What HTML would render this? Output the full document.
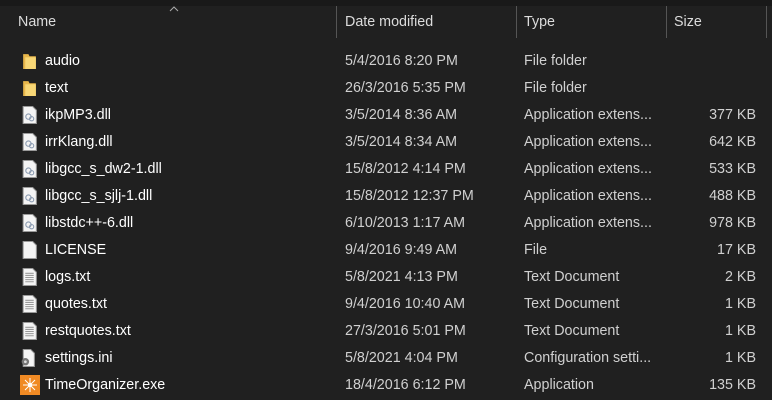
<html><head><style>
body{margin:0;width:772px;height:400px;background:#202020;font-family:"Liberation Sans",sans-serif;font-size:14.3px;overflow:hidden;position:relative}
.top{position:absolute;left:0;top:0;width:772px;height:6px;background:#191919}
.sep{position:absolute;top:6px;height:32px;width:1px;background:#555}
.h{position:absolute;top:14px;color:#dcdcdc}
.r{position:absolute;left:0;height:27px;width:772px}
.r span{position:absolute;top:5px;white-space:nowrap}
.n{left:45px;color:#fff}.d{left:345px;color:#d0d0d0}.t{left:524px;color:#d0d0d0}.s{right:16px;color:#d0d0d0}
.ic{position:absolute;left:22px;top:4px;width:15px;height:18px}
</style></head><body>
<div class="top"></div>
<div class="sep" style="left:336px"></div><div class="sep" style="left:516px"></div><div class="sep" style="left:666px"></div><div class="sep" style="left:766px"></div>
<svg style="position:absolute;left:169px;top:6px" width="10" height="6"><path d="M1 5L5 1L9 5" stroke="#aaa" fill="none"/></svg>
<div class="h" style="left:18px">Name</div><div class="h" style="left:345px">Date modified</div><div class="h" style="left:524px">Type</div><div class="h" style="left:674px">Size</div>

<div class="r" style="top:48px"><svg class="ic" viewBox="0 0 14 17"><path d="M1 2h5l1 2h6v12H1z" fill="#e8b64a"/><path d="M3 5h10v11H3z" fill="#f8d776"/></svg><span class="n">audio</span><span class="d">5/4/2016 8:20 PM</span><span class="t">File folder</span></div>
<div class="r" style="top:75px"><svg class="ic" viewBox="0 0 14 17"><path d="M1 2h5l1 2h6v12H1z" fill="#e8b64a"/><path d="M3 5h10v11H3z" fill="#f8d776"/></svg><span class="n">text</span><span class="d">26/3/2016 5:35 PM</span><span class="t">File folder</span></div>

<div class="r" style="top:102px"><svg class="ic" viewBox="0 0 14 17"><path d="M1 .5h9l3.5 3.5v12.5H1z" fill="#f4f4f4" stroke="#999"/><circle cx="6" cy="10" r="2.5" fill="none" stroke="#8a9ab0"/><circle cx="9" cy="12" r="2" fill="none" stroke="#8a9ab0"/></svg><span class="n">ikpMP3.dll</span><span class="d">3/5/2014 8:36 AM</span><span class="t">Application extens...</span><span class="s">377 KB</span></div>
<div class="r" style="top:129px"><svg class="ic" viewBox="0 0 14 17"><path d="M1 .5h9l3.5 3.5v12.5H1z" fill="#f4f4f4" stroke="#999"/><circle cx="6" cy="10" r="2.5" fill="none" stroke="#8a9ab0"/><circle cx="9" cy="12" r="2" fill="none" stroke="#8a9ab0"/></svg><span class="n">irrKlang.dll</span><span class="d">3/5/2014 8:34 AM</span><span class="t">Application extens...</span><span class="s">642 KB</span></div>
<div class="r" style="top:156px"><svg class="ic" viewBox="0 0 14 17"><path d="M1 .5h9l3.5 3.5v12.5H1z" fill="#f4f4f4" stroke="#999"/><circle cx="6" cy="10" r="2.5" fill="none" stroke="#8a9ab0"/><circle cx="9" cy="12" r="2" fill="none" stroke="#8a9ab0"/></svg><span class="n">libgcc_s_dw2-1.dll</span><span class="d">15/8/2012 4:14 PM</span><span class="t">Application extens...</span><span class="s">533 KB</span></div>
<div class="r" style="top:183px"><svg class="ic" viewBox="0 0 14 17"><path d="M1 .5h9l3.5 3.5v12.5H1z" fill="#f4f4f4" stroke="#999"/><circle cx="6" cy="10" r="2.5" fill="none" stroke="#8a9ab0"/><circle cx="9" cy="12" r="2" fill="none" stroke="#8a9ab0"/></svg><span class="n">libgcc_s_sjlj-1.dll</span><span class="d">15/8/2012 12:37 PM</span><span class="t">Application extens...</span><span class="s">488 KB</span></div>
<div class="r" style="top:210px"><svg class="ic" viewBox="0 0 14 17"><path d="M1 .5h9l3.5 3.5v12.5H1z" fill="#f4f4f4" stroke="#999"/><circle cx="6" cy="10" r="2.5" fill="none" stroke="#8a9ab0"/><circle cx="9" cy="12" r="2" fill="none" stroke="#8a9ab0"/></svg><span class="n">libstdc++-6.dll</span><span class="d">6/10/2013 1:17 AM</span><span class="t">Application extens...</span><span class="s">978 KB</span></div>

<div class="r" style="top:237px"><svg class="ic" viewBox="0 0 14 17"><path d="M1 .5h9l3.5 3.5v12.5H1z" fill="#f4f4f4" stroke="#999"/></svg><span class="n">LICENSE</span><span class="d">9/4/2016 9:49 AM</span><span class="t">File</span><span class="s">17 KB</span></div>
<div class="r" style="top:264px"><svg class="ic" viewBox="0 0 14 17"><path d="M1 .5h9l3.5 3.5v12.5H1z" fill="#f4f4f4" stroke="#999"/><path d="M3 5h8M3 7h8M3 9h8M3 11h8M3 13h8" stroke="#999"/></svg><span class="n">logs.txt</span><span class="d">5/8/2021 4:13 PM</span><span class="t">Text Document</span><span class="s">2 KB</span></div>
<div class="r" style="top:291px"><svg class="ic" viewBox="0 0 14 17"><path d="M1 .5h9l3.5 3.5v12.5H1z" fill="#f4f4f4" stroke="#999"/><path d="M3 5h8M3 7h8M3 9h8M3 11h8M3 13h8" stroke="#999"/></svg><span class="n">quotes.txt</span><span class="d">9/4/2016 10:40 AM</span><span class="t">Text Document</span><span class="s">1 KB</span></div>
<div class="r" style="top:318px"><svg class="ic" viewBox="0 0 14 17"><path d="M1 .5h9l3.5 3.5v12.5H1z" fill="#f4f4f4" stroke="#999"/><path d="M3 5h8M3 7h8M3 9h8M3 11h8M3 13h8" stroke="#999"/></svg><span class="n">restquotes.txt</span><span class="d">27/3/2016 5:01 PM</span><span class="t">Text Document</span><span class="s">1 KB</span></div>
<div class="r" style="top:345px"><svg class="ic" viewBox="0 0 14 17" style="left:20px"><path d="M3 .5h7l3.5 3.5v12.5H3z" fill="#f4f4f4" stroke="#999"/><circle cx="5" cy="12" r="3.5" fill="#777"/><circle cx="5" cy="12" r="1.3" fill="#ddd"/></svg><span class="n">settings.ini</span><span class="d">5/8/2021 4:04 PM</span><span class="t">Configuration setti...</span><span class="s">1 KB</span></div>
<div class="r" style="top:372px"><svg class="ic" viewBox="0 0 20 20" style="left:20px;top:3px;width:20px;height:20px"><rect width="20" height="20" fill="#f08a24"/><circle cx="10" cy="10" r="2.2" fill="#fff"/><path d="M10 3v14M3 10h14M5 5l10 10M15 5L5 15" stroke="#fff" stroke-width="1"/></svg><span class="n">TimeOrganizer.exe</span><span class="d">18/4/2016 6:12 PM</span><span class="t">Application</span><span class="s">135 KB</span></div>
</body></html>
